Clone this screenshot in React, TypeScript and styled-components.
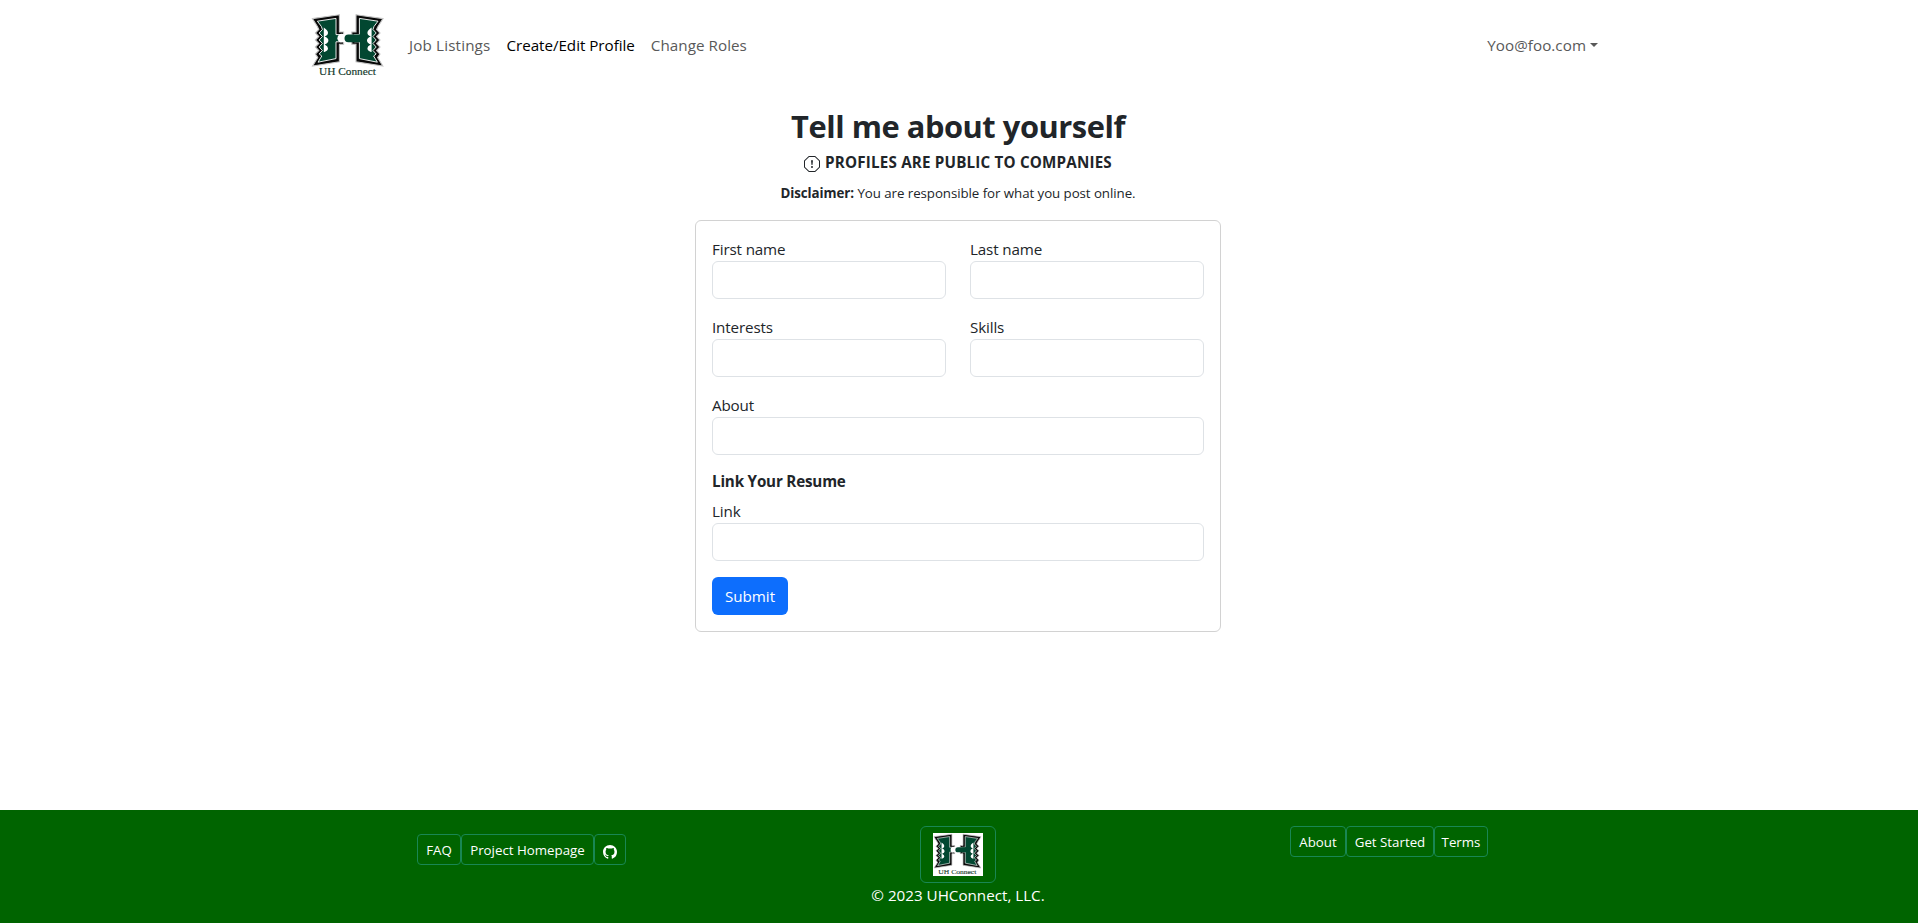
import React from 'react';
import styled, { createGlobalStyle } from 'styled-components';

const GlobalStyle = createGlobalStyle`
  *, *::before, *::after { box-sizing: border-box; }
  html, body { margin: 0; padding: 0; }
  body {
    font-family: 'Open Sans', 'Noto Sans', sans-serif;
    font-size: 15.2px;
    line-height: 24px;
    color: #212529;
    background: #fff;
  }
  h2, h6, p { margin: 0; }
`;

const Page = styled.div`
  min-height: 923px;
  display: flex;
  flex-direction: column;
`;

const Navbar = styled.nav`
  width: 1320px;
  height: 91px;
  margin: 0 auto;
  padding: 0 21px 0 12px;
  display: flex;
  align-items: center;
`;

const NavLinks = styled.div`
  display: flex;
  gap: 16px;
  margin-left: 23px;
  padding-bottom: 2px;
  flex: 1;
`;

const NavLink = styled.a<{ $active?: boolean; $spacing: number }>`
  color: ${(p) => (p.$active ? '#000' : '#595959')};
  letter-spacing: ${(p) => p.$spacing}px;
  white-space: nowrap;
`;

const UserMenu = styled.a`
  display: flex;
  align-items: center;
  gap: 4px;
  padding-bottom: 2px;
  color: #595959;
  letter-spacing: 0.05px;
`;

const Caret = styled.span`
  border-top: 4.8px solid #595959;
  border-left: 4.8px solid transparent;
  border-right: 4.8px solid transparent;
`;

const Main = styled.main`
  flex: 1;
  padding: 16px 2px 0 0;
  display: flex;
  flex-direction: column;
  align-items: center;
`;

const Title = styled.h2`
  font-size: 30.8px;
  font-weight: 700;
  line-height: 38px;
  letter-spacing: -0.45px;
  margin-bottom: 8px;
`;

const Notice = styled.h6`
  display: flex;
  align-items: center;
  gap: 5px;
  font-size: 15.2px;
  font-weight: 700;
  line-height: 19px;
  letter-spacing: 0.18px;
  margin-bottom: 8px;
  svg { position: relative; top: 1px; }
`;

const Disclaimer = styled.p`
  font-size: 13.3px;
  letter-spacing: -0.06px;
  padding-top: 1px;
  margin-bottom: 15px;
`;

const Card = styled.form`
  width: 526px;
  padding: 16px;
  border: 1px solid #d2d2d2;
  border-radius: 6px;
`;

const Row = styled.div`
  display: grid;
  grid-auto-flow: column;
  grid-auto-columns: 1fr;
  gap: 24px;
  margin-bottom: 16px;
`;

const Field = styled.label`
  display: block;
  letter-spacing: -0.14px;
`;

const Input = styled.input`
  display: block;
  width: 100%;
  height: 38px;
  padding: 6px 12px;
  border: 1px solid #dee2e6;
  border-radius: 6px;
  background: #fff;
`;

const SectionTitle = styled.h6`
  font-size: 15.2px;
  font-weight: 700;
  line-height: 21px;
  letter-spacing: -0.19px;
  margin-bottom: 7px;
`;

const Submit = styled.button`
  display: block;
  width: 76px;
  height: 38px;
  padding: 0;
  border: 0;
  border-radius: 6px;
  background: #0d6efd;
  color: #fff;
  font: inherit;
`;

const Footer = styled.footer`
  height: 113px;
  padding: 16px 0 0 417px;
  background: #006400;
  color: #fff;
  display: flex;
  align-items: flex-start;
`;

const ButtonGroup = styled.div<{ $top?: number }>`
  display: flex;
  margin-top: ${(p) => p.$top ?? 0}px;
`;

const FooterButton = styled.a<{ $width: number }>`
  width: ${(p) => p.$width}px;
  height: 31px;
  display: flex;
  align-items: center;
  justify-content: center;
  border: 1px solid #198754;
  border-radius: 4px;
  font-size: 13.3px;
  white-space: nowrap;
  svg { margin-top: 5px; }
`;

const FooterCenter = styled.div`
  width: 180px;
  margin: 0 242px 0 242px;
  display: flex;
  flex-direction: column;
  align-items: center;
  white-space: nowrap;
`;

const LogoButton = styled.a`
  display: flex;
  padding: 6px 12px;
  border: 1px solid #198754;
  border-radius: 6px;
`;

const Logo = ({ width, height }: { width: number; height: number }) => (
  <svg width={width} height={height} viewBox="0 0 75 65" preserveAspectRatio="none">
    <rect width="75" height="65" fill="#fff" />
    {[false, true].map((flip) => (
      <g key={String(flip)} transform={flip ? 'translate(73.4 0) scale(-1 1)' : undefined}>
        <path
          d="M1.4 5.6 L28.4 1.8 V19 H32.6 V31.2 H28.4 V48.8 L1.6 53 L6.8 44.5 L4.4 41 L7.8 37.5 L4.4 34 L7.8 30.5 L4.4 27 L7.8 23.5 L4.4 20 L7.8 16.5 L6.4 13.5Z"
          fill="#080808"
          stroke="#c4c4c4"
          strokeWidth="1.1"
        />
        <path
          d="M6.4 8.2 L25 5.4 V21.6 H30 V28.8 H25 V45.6 L7 49.2 L10.8 43 L8.2 41 L11.4 37.5 L8.2 34 L11.4 30.5 L8.2 27 L11.4 23.5 L8.2 20 L11.4 16.5 L10.4 13.5Z"
          fill="#024731"
          stroke="#fff"
          strokeWidth="0.9"
        />
        <path
          d="M12.8 14.5 V39 L13.4 39 Q17 37.8 17 35.2 Q17 33 13.6 31.4 Q17.4 30 17.4 27.4 Q17.4 25 13.6 23.6 Q17 22.4 17 19.8 Q17 17.4 12.8 14.5Z"
          fill="#fff"
        />
      </g>
    ))}
    <rect x="29.6" y="21.6" width="14" height="7.2" fill="#fff" />
    <circle cx="30.8" cy="25.2" r="4.4" fill="#fff" />
    <path d="M50 21.4 H37.4 A3.9 3.9 0 0 0 37.4 29.2 H50Z" fill="#024731" />
    <text
      x="8"
      y="61.6"
      fontFamily="'Liberation Serif', serif"
      fontSize="10.8"
      fill="#12382b"
      stroke="#12382b"
      strokeWidth="0.15"
      textLength="57"
      lengthAdjust="spacingAndGlyphs"
    >
      UH Connect
    </text>
  </svg>
);

const AlertOctagon = () => (
  <svg width="16" height="16" viewBox="0 0 16 16" fill="#212529">
    <path d="M4.54.146A.5.5 0 0 1 4.893 0h6.214a.5.5 0 0 1 .353.146l4.394 4.394a.5.5 0 0 1 .146.353v6.214a.5.5 0 0 1-.146.353l-4.394 4.394a.5.5 0 0 1-.353.146H4.893a.5.5 0 0 1-.353-.146L.146 11.46A.5.5 0 0 1 0 11.107V4.893a.5.5 0 0 1 .146-.353zM5.1 1 1 5.1v5.8L5.1 15h5.8l4.1-4.1V5.1L10.9 1z" />
    <path d="M7.002 11a1 1 0 1 1 2 0 1 1 0 0 1-2 0M7.1 4.995a.905.905 0 1 1 1.8 0l-.35 3.507a.552.552 0 0 1-1.1 0z" />
  </svg>
);

const GithubMark = () => (
  <svg width="14" height="14" viewBox="0 0 16 16" fill="#fff">
    <path d="M8 0C3.58 0 0 3.58 0 8c0 3.54 2.29 6.53 5.47 7.59.4.07.55-.17.55-.38 0-.19-.01-.82-.01-1.49-2.01.37-2.53-.49-2.69-.94-.09-.23-.48-.94-.82-1.13-.28-.15-.68-.52-.01-.53.63-.01 1.08.58 1.23.82.72 1.21 1.87.87 2.33.66.07-.52.28-.87.51-1.07-1.78-.2-3.64-.89-3.64-3.95 0-.87.31-1.59.82-2.15-.08-.2-.36-1.02.08-2.12 0 0 .67-.21 2.2.82.64-.18 1.32-.27 2-.27s1.36.09 2 .27c1.53-1.04 2.2-.82 2.2-.82.44 1.1.16 1.92.08 2.12.51.56.82 1.27.82 2.15 0 3.07-1.87 3.75-3.65 3.95.29.25.54.73.54 1.48 0 1.07-.01 1.93-.01 2.2 0 .21.15.46.55.38A8.01 8.01 0 0 0 16 8c0-4.42-3.58-8-8-8" />
  </svg>
);

const TextField = ({ label }: { label: string }) => (
  <Field>
    {label}
    <Input type="text" />
  </Field>
);

export default function App() {
  return (
    <Page>
      <GlobalStyle />
      <Navbar>
        <Logo width={75} height={65} />
        <NavLinks>
          <NavLink $spacing={0.16}>Job Listings</NavLink>
          <NavLink $active $spacing={-0.03}>Create/Edit Profile</NavLink>
          <NavLink $spacing={0.05}>Change Roles</NavLink>
        </NavLinks>
        <UserMenu>
          Yoo@foo.com
          <Caret />
        </UserMenu>
      </Navbar>
      <Main>
        <Title>Tell me about yourself</Title>
        <Notice>
          <AlertOctagon />
          PROFILES ARE PUBLIC TO COMPANIES
        </Notice>
        <Disclaimer>
          <b>Disclaimer:</b> You are responsible for what you post online.
        </Disclaimer>
        <Card>
          <Row>
            <TextField label="First name" />
            <TextField label="Last name" />
          </Row>
          <Row>
            <TextField label="Interests" />
            <TextField label="Skills" />
          </Row>
          <Row>
            <TextField label="About" />
          </Row>
          <SectionTitle>Link Your Resume</SectionTitle>
          <Row>
            <TextField label="Link" />
          </Row>
          <Submit type="button">Submit</Submit>
        </Card>
      </Main>
      <Footer>
        <ButtonGroup $top={8}>
          <FooterButton $width={44}>FAQ</FooterButton>
          <FooterButton $width={133}>Project Homepage</FooterButton>
          <FooterButton $width={32}><GithubMark /></FooterButton>
        </ButtonGroup>
        <FooterCenter>
          <LogoButton>
            <Logo width={50} height={43} />
          </LogoButton>
          © 2023 UHConnect, LLC.
        </FooterCenter>
        <ButtonGroup>
          <FooterButton $width={56}>About</FooterButton>
          <FooterButton $width={88}>Get Started</FooterButton>
          <FooterButton $width={54}>Terms</FooterButton>
        </ButtonGroup>
      </Footer>
    </Page>
  );
}
